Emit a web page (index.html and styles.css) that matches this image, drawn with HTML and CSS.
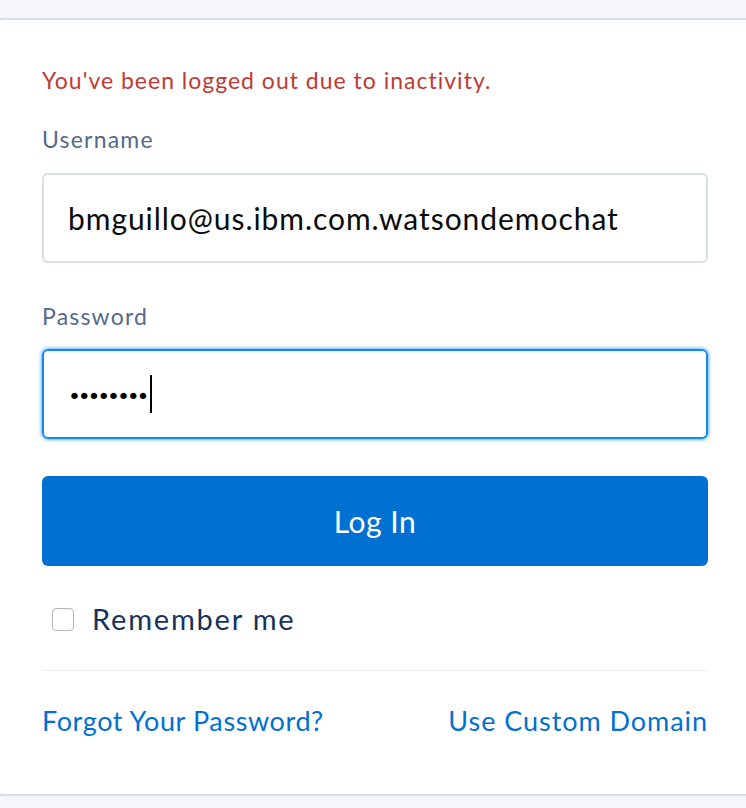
FILE: index.html
```html
<!DOCTYPE html>
<html lang="en">
<head>
<meta charset="utf-8">
<title>Login</title>
<link rel="stylesheet" href="styles.css">
</head>
<body>
<div class="card">
  <div class="error">You've been logged out due to inactivity.</div>
  <label class="label label-user">Username</label>
  <div class="input">bmguillo@us.ibm.com.watsondemochat</div>
  <label class="label label-pass">Password</label>
  <div class="input input-focus"><span class="dots">••••••••</span><span class="caret"></span></div>
  <button class="btn">Log In</button>
  <div class="remember"><span class="check"></span><span class="remember-text">Remember me</span></div>
  <div class="divider"></div>
  <div class="links">
    <a class="link link-forgot">Forgot Your Password?</a>
    <a class="link link-domain">Use Custom Domain</a>
  </div>
</div>
</body>
</html>
```

FILE: styles.css
```css
html, body {
  margin: 0;
  padding: 0;
  background: #f4f6f9;
  overflow: hidden;
  font-family: "Lato", "Liberation Sans", sans-serif;
}
.card {
  margin: 18px 0 0 -2px;
  width: 666px;
  background: #ffffff;
  border: 2px solid #d8dde6;
  border-radius: 4px;
  padding: 45px 40px 57px 42px;
  display: flex;
  flex-direction: column;
}
.error {
  color: #c23934;
  font-size: 23px;
  line-height: 30px;
  letter-spacing: 1px;
  margin-bottom: 29px;
}
.label {
  color: #54698d;
  font-size: 23px;
  line-height: 30px;
  letter-spacing: 1.2px;
}
.label-user { margin-bottom: 19px; }
.label-pass { margin-bottom: 18px; }
.input {
  box-sizing: border-box;
  height: 90px;
  border: 2px solid #d8dde6;
  border-radius: 6px;
  padding: 0 24px;
  display: flex;
  align-items: center;
  font-size: 30px;
  letter-spacing: 0.95px;
  color: #0a0a0a;
  margin-bottom: 38px;
}
.input-focus {
  border-color: #1589ee;
  box-shadow: 0 0 4px #1589ee;
  margin-bottom: 37px;
}
.dots {
  font-size: 22px;
  letter-spacing: -3.2px;
  color: #000;
  font-family: "DejaVu Sans", sans-serif;
  position: relative;
  top: 2px;
  margin-left: 0;
}
.caret {
  display: inline-block;
  width: 2px;
  height: 38px;
  background: #000;
  margin-left: 4px;
}
.btn {
  height: 90px;
  border: none;
  border-radius: 6px;
  background: #0070d2;
  color: #ffffff;
  font-family: inherit;
  font-size: 30px;
  letter-spacing: 0.5px;
  padding: 0;
  margin: 0 0 38px 0;
}
.remember {
  display: flex;
  align-items: center;
  height: 30px;
  margin-bottom: 36px;
}
.check {
  box-sizing: border-box;
  width: 22px;
  height: 23px;
  border: 1px solid #b7b7b7;
  border-radius: 4px;
  background: #fff;
  box-shadow: inset 0 1px 1px rgba(0,0,0,0.05);
  margin-left: 10px;
  margin-right: 18px;
}
.remember-text {
  color: #16325c;
  font-size: 29px;
  line-height: 30px;
  letter-spacing: 1.8px;
}
.divider {
  height: 1px;
  background: #eceef3;
  margin-bottom: 34px;
}
.links {
  display: flex;
  justify-content: space-between;
  font-size: 27px;
  line-height: 32px;
}
.link {
  color: #0070d2;
  text-decoration: none;
}
.link-forgot { letter-spacing: 0.6px; }
.link-domain { letter-spacing: 0.95px; }
```
